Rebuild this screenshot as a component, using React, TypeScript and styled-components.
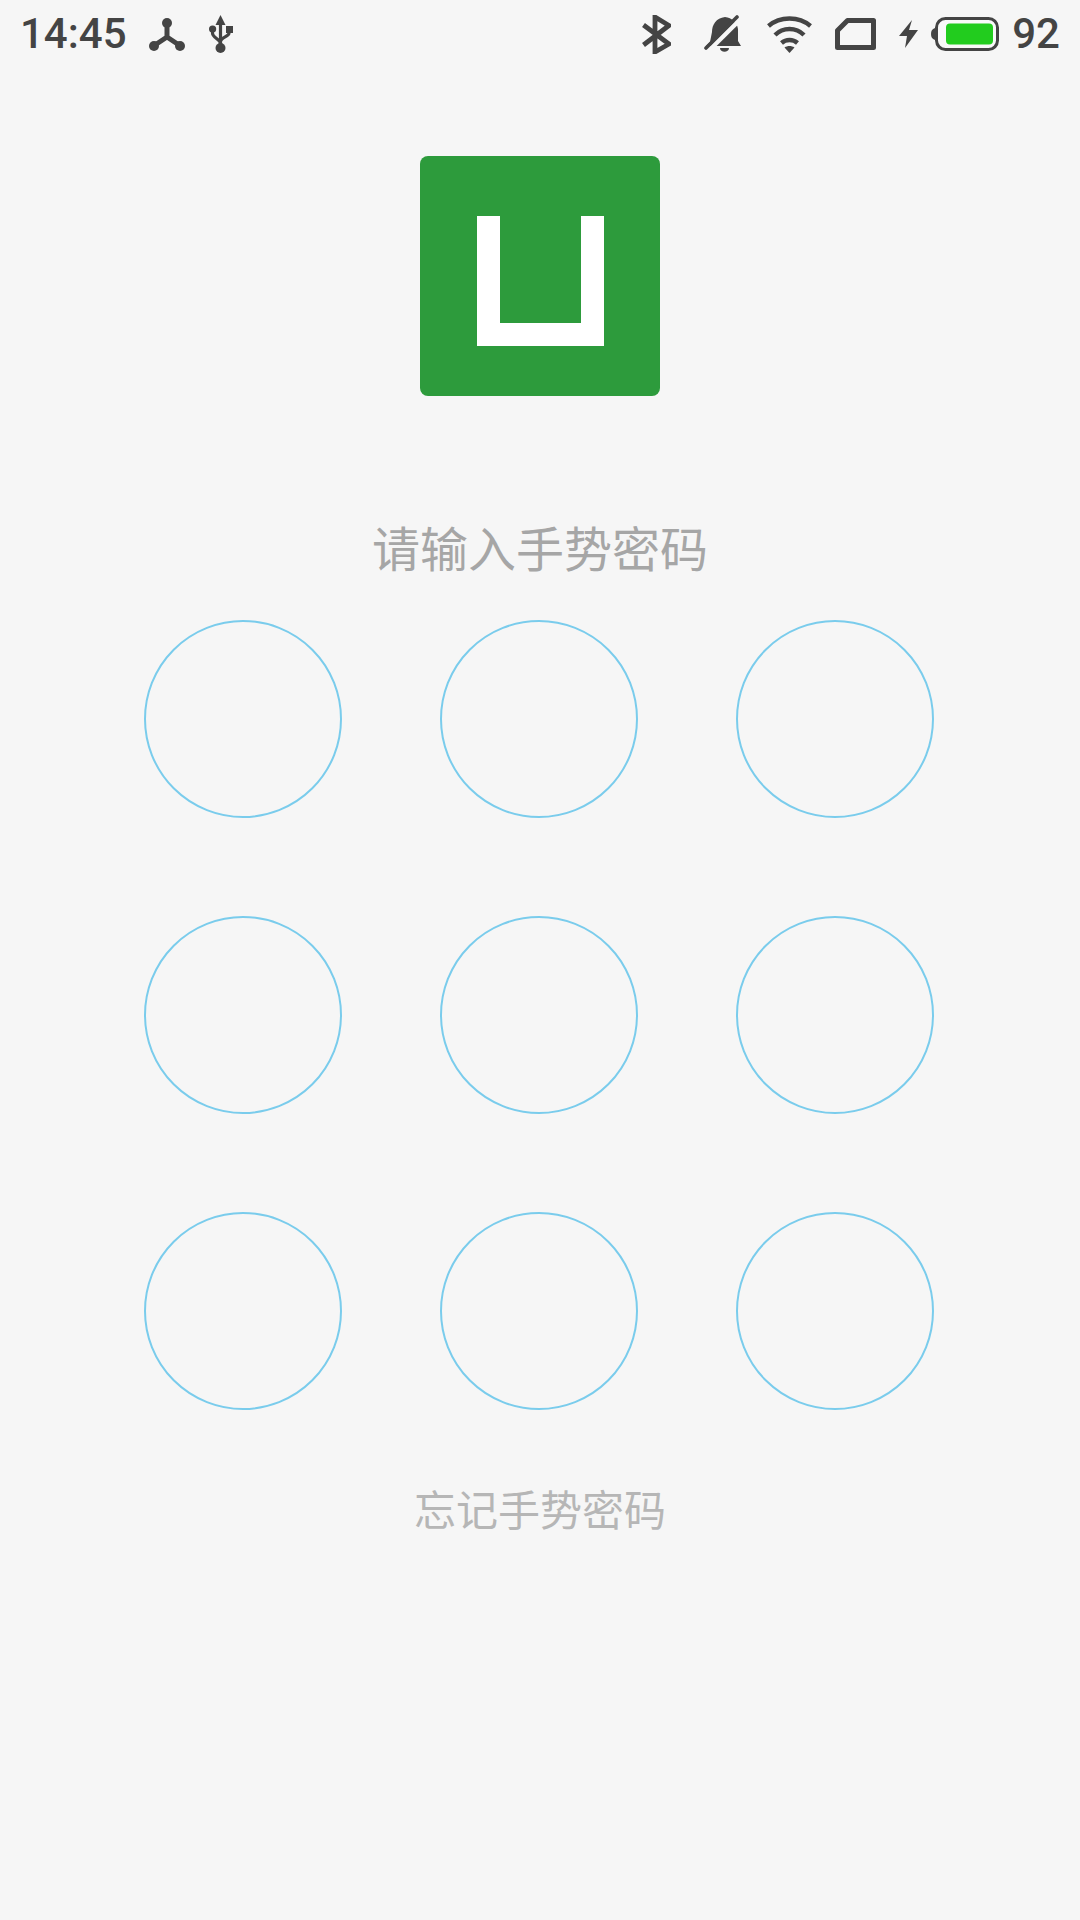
import React from "react";
import styled, { createGlobalStyle } from "styled-components";

const Global = createGlobalStyle`
  html, body { margin: 0; padding: 0; background: #f6f6f6; }
  #root { width: 1080px; height: 1920px; overflow: hidden; }
`;

const Page = styled.div`
  width: 1080px;
  height: 1920px;
  background: #f6f6f6;
  display: flex;
  flex-direction: column;
  align-items: center;
`;

const StatusBar = styled.div`
  width: 100%;
  box-sizing: border-box;
  height: 68px;
  padding: 0 20px;
  display: flex;
  align-items: center;
  justify-content: space-between;
  color: #444;
`;

const StatusGroup = styled.div`
  display: flex;
  align-items: center;
`;

const StatusText = styled.span<{ $gap?: number }>`
  font-family: Roboto, sans-serif;
  font-weight: 500;
  font-size: 42px;
  line-height: 68px;
  color: #444;
  margin-left: ${(p) => p.$gap ?? 0}px;
`;

const Glyph = styled.svg<{ $gap: number }>`
  display: block;
  flex: none;
  margin-left: ${(p) => p.$gap}px;
`;

const Logo = styled.div`
  width: 240px;
  height: 240px;
  margin-top: 88px;
  border-radius: 8px;
  background: #2d9b3c;
  display: flex;
  align-items: center;
  justify-content: center;
`;

const LogoMark = styled.div`
  box-sizing: border-box;
  width: 127px;
  height: 130px;
  margin-top: 10px;
  border: 23.5px solid #fff;
  border-top: none;
`;

const Title = styled.div`
  margin-top: 115px;
  font-family: "Noto Sans CJK SC", sans-serif;
  font-size: 48px;
  line-height: 70px;
  color: #a6a6a6;
`;

const Pad = styled.div`
  margin-top: 39px;
  margin-right: 2px;
  display: grid;
  grid-template-columns: repeat(3, 198px);
  grid-auto-rows: 198px;
  gap: 98px;
`;

const Dot = styled.div`
  box-sizing: border-box;
  border: 2px solid #7accec;
  border-radius: 50%;
`;

const Forgot = styled.div`
  margin-top: 67px;
  font-family: "Noto Sans CJK SC", sans-serif;
  font-size: 42px;
  line-height: 62px;
  color: #b6b6b6;
`;

const DARK = "#444";

export default function App() {
  return (
    <Page>
      <Global />
      <StatusBar>
        <StatusGroup>
          <StatusText>14:45</StatusText>
          <Glyph $gap={22} width={36} height={33} viewBox="0 0 36 33">
            <path d="M18 5V19L4.5 28M18 19L31.5 28" fill="none" stroke={DARK} strokeWidth={5} />
            <circle cx={18} cy={5} r={5} fill={DARK} />
            <circle cx={5} cy={28} r={5} fill={DARK} />
            <circle cx={31} cy={28} r={5} fill={DARK} />
          </Glyph>
          <Glyph $gap={24} width={24} height={38} viewBox="0 0 24 38">
            <path d="M11.5 0L16.5 10H6.5Z" fill={DARK} />
            <path d="M11.5 8V32M3.5 14V18C3.5 23 11.5 24 11.5 29M20 16V18C20 22 11.5 22 11.5 27" fill="none" stroke={DARK} strokeWidth={3.2} />
            <circle cx={11.5} cy={33} r={5} fill={DARK} />
            <circle cx={3.6} cy={14} r={3.6} fill={DARK} />
            <rect x={17} y={11} width={7} height={7} fill={DARK} />
          </Glyph>
        </StatusGroup>
        <StatusGroup>
          <Glyph $gap={0} width={29} height={39} viewBox="0 0 29 39">
            <path d="M1.5 10L27 29L13 37V2L27 10.5L1.5 30" fill="none" stroke={DARK} strokeWidth={4.8} />
          </Glyph>
          <Glyph $gap={33} width={37} height={39} viewBox="0 0 37 39">
            <path d="M21 2C12 3 8 10 8 17L6 27L2 31H37L34 26V14C33 7 28 3 21 2Z" fill={DARK} />
            <path d="M16 33H25C25 38 16 38 16 33Z" fill={DARK} />
            <path d="M5 35.5L37 3.5" stroke="#f6f6f6" strokeWidth={4.5} />
            <path d="M2 33L33 2" stroke={DARK} strokeWidth={3.6} strokeLinecap="round" />
          </Glyph>
          <Glyph $gap={26} width={45} height={38} viewBox="0 0 45 38">
            <path d="M1.5 11C13 1 32 1 43.5 11M8 20C16 12 29 12 37 20M14.5 28C19 24 26 24 30.5 28" fill="none" stroke={DARK} strokeWidth={4.4} />
            <path d="M17.5 32.5C20.5 30.5 24.5 30.5 27.5 32.5L22.5 38Z" fill={DARK} />
          </Glyph>
          <Glyph $gap={23} width={41} height={32} viewBox="0 0 41 32">
            <path d="M2.5 12.5L12.5 2.5H38.5V29.5H2.5Z" fill="none" stroke={DARK} strokeWidth={5} strokeLinejoin="round" />
          </Glyph>
          <Glyph $gap={23} width={19} height={28} viewBox="0 0 19 28">
            <path d="M13 0L0 16H8L6 28L19 10H10Z" fill={DARK} />
          </Glyph>
          <Glyph $gap={13} width={68} height={34} viewBox="0 0 68 34">
            <path d="M4 11C1 12 0 14 0 17C0 20 1 22 4 23Z" fill={DARK} />
            <rect x={5.5} y={1.5} width={61} height={31} rx={9} fill="#f9f9f9" stroke={DARK} strokeWidth={3} />
            <rect x={15} y={6.5} width={47} height={21} rx={4} fill="#22cc1e" />
          </Glyph>
          <StatusText $gap={13}>92</StatusText>
        </StatusGroup>
      </StatusBar>
      <Logo>
        <LogoMark />
      </Logo>
      <Title>请输入手势密码</Title>
      <Pad>
        {Array.from({ length: 9 }, (_, i) => (
          <Dot key={i} />
        ))}
      </Pad>
      <Forgot>忘记手势密码</Forgot>
    </Page>
  );
}
